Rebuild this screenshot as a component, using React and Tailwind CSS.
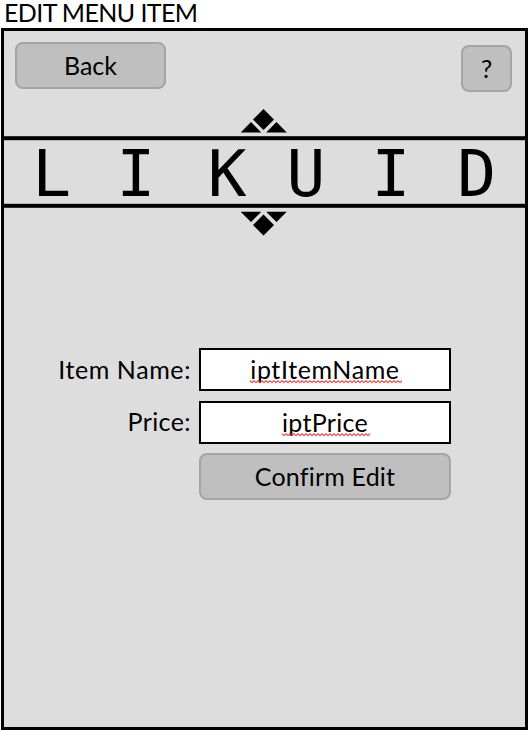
function Logo() {
  return (
    <svg className="block w-full" viewBox="4 108 521 128" height="128" role="img" aria-label="LIKUID">
      <path d="M263.5 109l10.5 10.5-10.5 10.5-10.5-10.5zM251 122l10.3 10.5h-20.6zM276.5 122l10.3 10.5h-20.6z" />
      <path d="M263.5 235.5l10.5-10.5-10.5-10.5-10.5 10.5zM251 222l10.3-10.3h-20.6zM276.5 222l10.3-10.3h-20.6z" />
      <rect x="4" y="136.2" width="521" height="4" />
      <rect x="4" y="203.8" width="521" height="4" />
      <text x="32.3 116.5 207.7 286.5 371.5 457.2" y="196" fontSize="64.5" fontFamily="'DejaVu Sans Mono', monospace">
        LIKUID
      </text>
    </svg>
  );
}

// Spell-check underline beneath an identifier
function Squiggle({ className }) {
  return (
    <svg className={`absolute h-[4px] ${className}`} aria-hidden="true">
      <defs>
        <pattern id="wave" width="4" height="4" patternUnits="userSpaceOnUse">
          <path d="M-1 0.5L0 0.8L2 2.6L4 0.8L5 0.5" fill="none" stroke="#ff3030" strokeWidth="1.1" />
        </pattern>
      </defs>
      <rect width="100%" height="4" fill="url(#wave)" />
    </svg>
  );
}

const button =
  "flex items-center justify-center rounded-[8px] border-2 border-[#a5a5a5] bg-[#bfbfbf] pb-[2px]";
const field = "relative flex h-[43px] w-[252px] items-center justify-center border-2 border-black bg-white pb-[2px]";

export default function App() {
  return (
    <div className="flex h-[730px] w-[528px] flex-col bg-white pl-px font-['Lato',sans-serif] text-[25px] leading-[28px] text-black [font-variant-ligatures:none]">
      <h1 className="h-[28px] pl-[3px] leading-[24px] tracking-[-0.6px]">EDIT MENU ITEM</h1>
      <main className="flex h-[702px] flex-col border-[3px] border-black bg-[#dddddd]">
        <div className="flex h-[77px] justify-between pt-[11px] pr-[13px] pl-[11px]">
          <button className={`${button} h-[47px] w-[151px]`}>
            <span>Back</span>
          </button>
          <button className={`${button} mt-[3px] h-[47px] w-[51px]`}>
            <span>?</span>
          </button>
        </div>
        <Logo />
        <form className="mt-[112px] flex flex-col">
          <div className="flex h-[53px]">
            <label className="mr-[8px] w-[187px] pt-[7px] text-right tracking-[0.6px]">Item Name:</label>
            <div className={field}>
              <span className="tracking-[0.6px]">iptItemName</span>
              <Squiggle className="top-[30px] left-[49px] w-[152px]" />
            </div>
          </div>
          <div className="flex h-[52px]">
            <label className="mr-[8px] w-[187px] pt-[6px] text-right tracking-[0.4px]">Price:</label>
            <div className={field}>
              <span className="tracking-[0.3px]">iptPrice</span>
              <Squiggle className="top-[30px] left-[81px] w-[88px]" />
            </div>
          </div>
          <button type="button" className={`${button} ml-[195px] h-[47px] w-[252px]`}>
            <span className="tracking-[0.2px]">Confirm Edit</span>
          </button>
        </form>
      </main>
    </div>
  );
}
